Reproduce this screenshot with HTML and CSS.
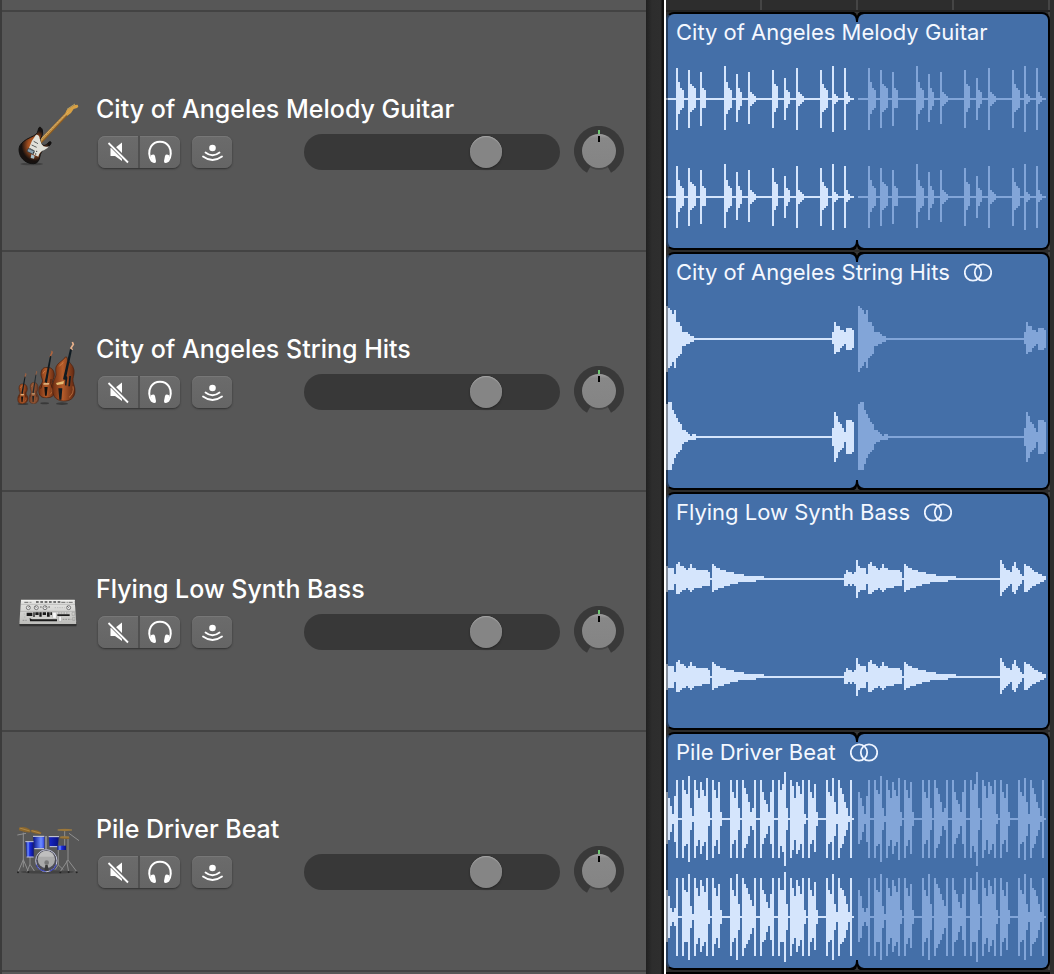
FILE: index.html
```html
<!DOCTYPE html>
<html lang="en">
<head>
<meta charset="utf-8">
<title>Tracks</title>
<link rel="stylesheet" href="styles.css">
</head>
<body>
<svg class="defs" aria-hidden="true">
  <defs>
    <linearGradient id="body-wood" x1="0" x2="1"><stop offset="0" stop-color="#6e2f14"/><stop offset=".45" stop-color="#b55c2a"/><stop offset="1" stop-color="#5c2510"/></linearGradient>
    <radialGradient id="sunburst"><stop offset="0" stop-color="#d07a34"/><stop offset=".45" stop-color="#a04c1e"/><stop offset=".85" stop-color="#17110f"/></radialGradient>
    <linearGradient id="shell" x1="0" x2="1"><stop offset="0" stop-color="#0a1590"/><stop offset=".3" stop-color="#6d8dff"/><stop offset=".5" stop-color="#1a2be0"/><stop offset="1" stop-color="#0a1280"/></linearGradient>
    <linearGradient id="silver" x1="0" y1="0" x2="0" y2="1"><stop offset="0" stop-color="#e9e9e7"/><stop offset="1" stop-color="#bdbdba"/></linearGradient>
    <linearGradient id="cap" x1="0" y1="0" x2="0" y2="1"><stop offset="0" stop-color="#a2a2a2"/><stop offset=".12" stop-color="#888"/><stop offset="1" stop-color="#848484"/></linearGradient>
  </defs>
  <symbol id="i-mute" viewBox="0 0 40 32">
    <path fill="#fff" d="M12.500 12h4.500L24 6.500v18.500l-7-5h-4.500z"/>
    <path stroke="#686868" stroke-width="4" d="M11 7l19 19"/>
    <path stroke="#fff" stroke-width="1.800" d="M10.500 7l19.500 19.500"/>
  </symbol>
  <symbol id="i-solo" viewBox="0 0 40 32">
    <path fill="none" stroke="#fff" stroke-width="2" d="M12 25.500C8.500 21 8.500 14.500 11 10.500 15 4 25 4 29 10.500 31.500 14.500 31.500 21 28 25.500"/>
    <path fill="#fff" d="M10.700 19.500q3.300-2 4.300.5l1 5q.3 1.800-1.500 2-2.300.2-3-1.800zM29.300 19.500q-3.300-2-4.300.5l-1 5q-.3 1.800 1.500 2 2.300.2 3-1.800z"/>
  </symbol>
  <symbol id="i-monitor" viewBox="0 0 40 32">
    <circle cx="20.500" cy="12" r="3.300" fill="#fff"/>
    <path fill="none" stroke="#fff" stroke-width="1.800" stroke-linecap="round" d="M13.500 16.500q7 5.500 14 0M11 20.500q9.500 7 19 0"/>
  </symbol>
  <symbol id="i-knob" viewBox="0 0 50 50">
    <path fill="#393939" d="M13 46.800A25 25 0 1 1 37 46.800L29 32H21z"/>
    <circle cx="25" cy="26.500" r="17.300" fill="#3b3b3b" opacity=".6"/>
    <circle cx="25" cy="25" r="17" fill="url(#cap)"/>
    <path fill="#6fc974" d="M24 4h2v4h-2z"/><path d="M24 10h2v6h-2z"/>
  </symbol>
  <symbol id="i-stereo" viewBox="0 0 28 20">
    <g fill="none" stroke="#eef4ff" stroke-width="1.800"><circle cx="9" cy="10.500" r="8.200"/><circle cx="19" cy="10.500" r="8.200"/></g>
  </symbol>
  <symbol id="i-notch" viewBox="0 0 16 10">
    <path d="M1 0H15V2Q9 3 9 9V10H7V9Q7 3 1 2z"/><path fill="#383838" d="M5 0Q7.500 1 8 4 8.500 1 11 0z"/>
  </symbol>
  <symbol id="violin" viewBox="0 0 56 110" preserveAspectRatio="none">
    <path fill="none" stroke="#b5653b" stroke-width="4" d="M39 3q5 2 0 6l-4 8"/>
    <path fill="url(#body-wood)" stroke="#48200f" stroke-width="2" d="M22 40C13 40 7 47 8 57c1 7 6 10 4 16-2 5-11 9-11 20 0 11 9 16 23 16s26-5 27-18c0-9-8-12-9-17s6-9 6-17c0-11-9-17-17-17z"/>
    <path fill="#111b20" d="M35 13l4 2-13 60-7-2z"/>
    <path fill="#ddb07b" d="M16 75h17l-2 4H15z"/>
    <path fill="#111" d="M18 84h10l-3 20h-5z"/>
    <path fill="none" stroke="#35150a" stroke-width="2" d="M11 78q-2 7-4 10M38 66q-3 10 3 20"/>
    <path fill="none" stroke="#e79152" stroke-width="2" opacity=".7" d="M14 54q1-5 7-6M42 88q2 8-6 13"/>
  </symbol>
</svg>

<main class="arrange">
  <section class="headers" aria-label="Track headers">
    <div class="lead"></div>

    <article class="track">
      <svg class="instrument" viewBox="0 -3 240 240" aria-hidden="true">
        <ellipse cx="65" cy="207" rx="34" ry="4" fill="#2d2d2d" opacity=".55"/>
        <path fill="none" stroke="#8b5b22" stroke-width="11" d="M90 142L174 53"/>
        <path fill="none" stroke="#c9984a" stroke-width="7" d="M89 140L174 51"/>
        <path fill="#d7a044" d="M165 58l5-13 14-9 10-6 9-1 2 6-4 4-10 3-8 12-11 8z"/>
        <path fill="none" stroke="#efc968" stroke-width="2" d="M171 43l24-16"/>
        <path fill="none" stroke="#5f3e18" stroke-width="3" stroke-dasharray="1 6" d="M88 142L171 52"/>
        <path fill="url(#sunburst)" stroke="#111" stroke-width="3" d="M88 97c-5 6-3 15-9 20-8 8-27 12-39 23-13 10-15 22-11 36 4 16 22 31 42 30 16-1 17-16 20-27 3-12 11-19 23-24 10-5 11-15 7-15-7 0-8 8-16 11-8 2-16-8-14-17 2-10 10-14 6-29-2-7-7-10-9-8z"/>
        <path fill="#e0e0d8" d="M78 119q10-1 11 12l6 17q8 12 22 5-2 6-14 12-15 5-18 20l-13-6-15-20 9-22z"/>
        <path stroke="#5a5d5c" stroke-width="3" d="M71 139l13 7M65 150l15 7M59 160l15 8"/>
        <path fill="#8aa0ad" stroke="#26343d" stroke-width="2" d="M55 160l18 9-4 9-18-9z"/>
        <path fill="#a8c1cc" d="M64 178l10 4-2 9-10-2z"/>
        <g fill="#333"><circle cx="80" cy="169" r="2"/><circle cx="77" cy="177" r="2"/><circle cx="71" cy="173" r="2"/></g>
        <path stroke="#fff" opacity=".5" d="M62 163L175 50"/>
      </svg>
      <div class="body">
        <h2>City of Angeles Melody Guitar</h2>
        <div class="controls">
          <div class="pair"><button aria-label="Mute"><svg><use href="#i-mute"/></svg></button><button aria-label="Solo"><svg><use href="#i-solo"/></svg></button></div>
          <button class="single" aria-label="Input monitoring"><svg><use href="#i-monitor"/></svg></button>
          <input class="volume" type="range" max="1000" value="745" aria-label="Volume">
          <label class="knob"><svg><use href="#i-knob"/></svg><input type="range" min="-64" max="63" value="0" aria-label="Pan"></label>
        </div>
      </div>
    </article>

    <article class="track">
      <svg class="instrument" viewBox="0 -3 240 240" aria-hidden="true">
        <g fill="#222" opacity=".55"><ellipse cx="39" cy="207" rx="16" ry="3"/><ellipse cx="104" cy="205" rx="13" ry="3"/><ellipse cx="156" cy="206" rx="18" ry="4"/></g>
        <use href="#violin" x="22" y="113" width="35" height="94"/>
        <use href="#violin" x="56" y="106" width="33" height="101" opacity=".75"/>
        <use href="#violin" x="85" y="45" width="56" height="145"/>
        <path fill="none" stroke="#e8b18b" stroke-width="5" d="M187 21l3 7-7 11 4 6"/>
        <path fill="url(#body-wood)" stroke="#48200f" stroke-width="2" d="M166 66c-6 12-23 16-28 30-3 12 3 21-2 31-7 11-9 22-8 40 1 19 12 30 32 31 21 1 33-9 35-27 1-14-4-21-6-32-2-10 5-19 3-34-2-17-20-24-22-39z"/>
        <path fill="#101b22" d="M180 42l6 2-19 91-8-2z"/>
        <path fill="#101b22" d="M145 160h12l-3 34h-6zM167 123q7 0 4 13l-2 16-4-1zM178 123h5l-3 31h-5z"/>
        <path fill="#e5bd72" d="M138 144l24-6-2 9-19 3z"/>
        <path fill="none" stroke="#e39155" stroke-width="3" opacity=".6" d="M148 94q7-9 12-11M189 154q4 22-12 33"/>
      </svg>
      <div class="body">
        <h2>City of Angeles String Hits</h2>
        <div class="controls">
          <div class="pair"><button aria-label="Mute"><svg><use href="#i-mute"/></svg></button><button aria-label="Solo"><svg><use href="#i-solo"/></svg></button></div>
          <button class="single" aria-label="Input monitoring"><svg><use href="#i-monitor"/></svg></button>
          <input class="volume" type="range" max="1000" value="745" aria-label="Volume">
          <label class="knob"><svg><use href="#i-knob"/></svg><input type="range" min="-64" max="63" value="0" aria-label="Pan"></label>
        </div>
      </div>
    </article>

    <article class="track">
      <svg class="instrument" viewBox="0 -33 240 240" aria-hidden="true">
        <path fill="#333" d="M27 112h174l-2 12H29z"/>
        <path fill="url(#silver)" d="M33 44h161l5 73H28z"/>
        <path fill="#f1f1ef" d="M34 45h160v3H34z"/>
        <path stroke="#6b6b6b" stroke-width="3" stroke-dasharray="12 4 3 3" d="M43 52h23M154 52h36"/>
        <path stroke="#4e4e4e" stroke-width="4" stroke-dasharray="8 5" d="M78 51h74"/>
        <path stroke="#777" d="M32 58h163M30 79h167"/>
        <g fill="#e9e9e9" stroke="#4b4b4b" stroke-width="2"><circle cx="55" cy="68" r="6"/><circle cx="79" cy="68" r="6"/><circle cx="105" cy="68" r="6"/><circle cx="176" cy="68" r="6"/></g>
        <path stroke="#222" stroke-width="2" d="M55 67l4-3M79 68l-4-4M105 68l3-4M176 68l-4-4M90 66h5M115 66h5"/>
        <path stroke="#aaa" stroke-width="2" stroke-dasharray="4 3" d="M134 68h30M41 87h7M42 96h7"/>
        <path fill="#1a1a1a" d="M50 83h17v10H50zM70 82h4v14h-4zM76 82h10v8H76zM88 82h7v13h-7zM98 82h10v8H98zM111 82h8v13h-8zM121 82h5v8h-5zM142 88h37v5h-37zM59 99l6 4h76v6H60z"/>
        <path fill="#fafafa" stroke="#888" d="M128 82h11v18h-11zM147 94h7v15h-7z"/>
        <path stroke="#777" stroke-width="2" stroke-dasharray="5 3" d="M144 84h34M158 103h26M38 106h12"/>
        <path fill="none" stroke="#777" d="M186 82h8v9h-8zM188 97h7v9h-7z"/>
        <path stroke="#e8e8e6" stroke-width="2" d="M68 99h70"/>
      </svg>
      <div class="body">
        <h2>Flying Low Synth Bass</h2>
        <div class="controls">
          <div class="pair"><button aria-label="Mute"><svg><use href="#i-mute"/></svg></button><button aria-label="Solo"><svg><use href="#i-solo"/></svg></button></div>
          <button class="single" aria-label="Input monitoring"><svg><use href="#i-monitor"/></svg></button>
          <input class="volume" type="range" max="1000" value="745" aria-label="Volume">
          <label class="knob"><svg><use href="#i-knob"/></svg><input type="range" min="-64" max="63" value="0" aria-label="Pan"></label>
        </div>
      </div>
    </article>

    <article class="track">
      <svg class="instrument" viewBox="0 -3 240 240" aria-hidden="true">
        <ellipse cx="112" cy="171" rx="80" ry="5" fill="#363636" opacity=".6"/>
        <g fill="none" stroke="#8f8f8f" stroke-width="3"><path d="M40 53v104M40 134l-16 38M40 134l15 36M60 126v22l-9 22M60 148l13 20M164 45v52M174 70v65l-24 36M174 135l27 36M170 137l6 34M145 102v48l-10 14M145 150l15 14M177 55l30 22M22 60l26-5"/></g>
        <path fill="url(#shell)" stroke="#111b70" d="M47 80h24v46H50z"/>
        <path stroke="#ccd" stroke-width="3" d="M46 80h26M50 126h21"/>
        <path fill="url(#shell)" stroke="#111b70" d="M70 65h33v35H73zM117 66h29l-3 29h-24z"/>
        <path stroke="#d5d6e5" stroke-width="3" d="M69 64h34M116 65h31M73 101h29M119 95h24"/>
        <path fill="url(#shell)" d="M142 92h26v13h-26z"/>
        <path stroke="#bbb" stroke-width="3" d="M108 63v40"/>
        <ellipse cx="109" cy="137" rx="33" ry="34" fill="#4c4c58"/>
        <ellipse cx="109" cy="137" rx="32" ry="33" fill="none" stroke="#c4c7dc" stroke-width="3"/>
        <circle cx="109" cy="133" r="26" fill="#aaa"/>
        <path fill="#c4c4c4" d="M86 125q5-17 23-17t23 17z" opacity=".8"/>
        <path fill="none" stroke="#2831bb" stroke-width="3" d="M79 149q5 17 28 20M139 149q-4 15-20 20"/>
        <circle cx="110" cy="143" r="7" fill="#777"/><path fill="#3a3a3a" d="M106 150h7l3 17h-13z"/>
        <path fill="#8a662d" d="M27 39q14-7 32 4l2 9q-17 1-34-6zM62 45q19-3 33 8l-4 5q-17-1-29-7zM141 45q23-8 47 0-23 7-47 0zM150 66q12-4 28 0v5q-15 2-28-1z"/>
        <path fill="none" stroke="#c09a55" stroke-width="2" d="M29 39l30 9M65 47l27 8M143 45h43M151 66h26"/>
        <g fill="#222"><circle cx="24" cy="172" r="3"/><circle cx="55" cy="171" r="3"/><circle cx="151" cy="172" r="3"/><circle cx="200" cy="172" r="3"/><circle cx="176" cy="171" r="3"/></g>
      </svg>
      <div class="body">
        <h2>Pile Driver Beat</h2>
        <div class="controls">
          <div class="pair"><button aria-label="Mute"><svg><use href="#i-mute"/></svg></button><button aria-label="Solo"><svg><use href="#i-solo"/></svg></button></div>
          <button class="single" aria-label="Input monitoring"><svg><use href="#i-monitor"/></svg></button>
          <input class="volume" type="range" max="1000" value="745" aria-label="Volume">
          <label class="knob"><svg><use href="#i-knob"/></svg><input type="range" min="-64" max="63" value="0" aria-label="Pan"></label>
        </div>
      </div>
    </article>
  </section>

  <div class="divider"></div>

  <section class="timeline" aria-label="Timeline">
    <div class="lead"></div>
    <div class="lane"><div class="region">
      <h3>City of Angeles Melody Guitar</h3>
      <svg class="wave" data-wave="guitar" viewBox="0 0 384 198" preserveAspectRatio="none"></svg>
      <svg class="notch"><use href="#i-notch"/></svg><svg class="notch bottom"><use href="#i-notch"/></svg>
    </div></div>
    <div class="lane"><div class="region">
      <h3>City of Angeles String Hits <svg class="stereo"><use href="#i-stereo"/></svg></h3>
      <svg class="wave" data-wave="strings" viewBox="0 0 384 198" preserveAspectRatio="none"></svg>
      <svg class="notch"><use href="#i-notch"/></svg><svg class="notch bottom"><use href="#i-notch"/></svg>
    </div></div>
    <div class="lane"><div class="region">
      <h3>Flying Low Synth Bass <svg class="stereo"><use href="#i-stereo"/></svg></h3>
      <svg class="wave" data-wave="bass" viewBox="0 0 384 198" preserveAspectRatio="none"></svg>
    </div></div>
    <div class="lane"><div class="region">
      <h3>Pile Driver Beat <svg class="stereo"><use href="#i-stereo"/></svg></h3>
      <svg class="wave" data-wave="beat" viewBox="0 0 384 198" preserveAspectRatio="none"></svg>
      <svg class="notch"><use href="#i-notch"/></svg><svg class="notch bottom"><use href="#i-notch"/></svg>
    </div></div>
    <div class="next-region"></div>
  </section>
</main>
<script src="waves.js"></script>
</body>
</html>
```

FILE: styles.css
```css
* { box-sizing: border-box; }
body {
  margin: 0;
  background: #575757;
  font-family: Inter, "Liberation Sans", sans-serif;
  color: #fff;
}
.defs { position: absolute; width: 0; height: 0; }
h2, h3 { margin: 0; white-space: nowrap; }
.arrange {
  display: grid;
  grid-template-columns: 646fr 20px 388fr;
  min-height: 100vh;
}
.lead { height: 12px; border-bottom: 2px solid #434343; }
.headers { background: #575757; border-left: 2px solid #3c3c3c; }
.track {
  display: flex;
  gap: 6px;
  height: 240px;
  padding: 82px 22px 0 8px;
  border-bottom: 2px solid #434343;
}
.instrument { flex: none; width: 80px; height: 80px; }
.body { flex: 1; min-width: 0; }
.body h2 { font-size: 25px; font-weight: 500; line-height: 30px; }
.controls {
  display: flex;
  align-items: center;
  height: 52px;
  margin-top: 2px;
  padding-left: 2px;
}
.pair, .single {
  display: flex;
  flex: none;
  height: 32px;
  border: 0;
  border-radius: 7px;
  background: linear-gradient(#6b6b6b, #656565);
  box-shadow: 0 1px 2px #303030, inset 0 1px 0 #777;
}
.pair { width: 82px; }
.single { width: 40px; margin-left: 12px; padding: 0; }
.pair button { flex: 1; padding: 0; border: 0; background: none; }
.pair button + button { border-left: 2px solid #505050; }
.pair svg, .single svg { display: block; width: 40px; height: 32px; }
.volume {
  appearance: none;
  width: 256px;
  height: 36px;
  margin: 0 14px 0 auto;
  padding: 0 2px;
  border-radius: 18px;
  background: #383838;
}
.volume::-webkit-slider-thumb {
  appearance: none;
  width: 32px;
  height: 32px;
  border-radius: 50%;
  background: #858585;
  box-shadow: 0 1px 2px #222, inset 0 1px 1px #a5a5a5;
}
.knob { position: relative; flex: none; align-self: flex-start; width: 50px; height: 50px; }
.knob svg { display: block; width: 50px; height: 50px; }
.knob input { position: absolute; inset: 0; width: 100%; height: 100%; margin: 0; opacity: 0; }

.divider {
  border-right: 2px solid #fff;
  background: linear-gradient(90deg, #202020, #2d2d2d 6px, #2e2e2e 15px, #111 16px);
}
.timeline {
  padding-right: 4px;
  background: repeating-linear-gradient(90deg, #2d2d2d 0 94px, #454545 94px 96px);
}
.timeline .lead { border-color: #222; }
.lane { height: 240px; border-bottom: 2px solid #2b2b2b; }
.next-region { height: 2px; background: #000; }
.region {
  position: relative;
  height: 238px;
  border: 2px solid #000;
  border-left-color: #243c5c;
  border-radius: 8px;
  background: #446fa8;
}
.region h3 {
  display: flex;
  align-items: center;
  gap: 14px;
  padding-left: 8px;
  font-size: 22px;
  font-weight: 400;
  line-height: 36px;
  color: #f4f8ff;
}
.stereo { flex: none; width: 28px; height: 20px; }
.wave { display: block; width: calc(100% + 4px); height: 198px; margin-left: -2px; shape-rendering: crispEdges; }
.played { fill: #d5e5fc; }
.looped { fill: #82a5d8; }
.edge { fill: #838d9b; }
.notch { position: absolute; top: -2px; left: calc(50% - 9px); width: 16px; height: 10px; }
.notch.bottom { top: auto; bottom: -2px; transform: scaleY(-1); }
```

FILE: waves.js
```js
// Peaks above and below the centre line of each channel, one pair per column.
// Each entry is [first column, peaks above, peaks below].
const guitar = [
  [5, [15, 8, 5, 4], [15, 7, 5, 4]], [11, [14, 7, 6, 5], [14, 6, 5, 4]], [17, [13, 5, 4], [13, 4, 4]],
  [29, [16, 8, 5, 4], [15, 7, 5, 4]], [35, [12, 5, 3], [11, 5, 3]], [41, [13, 3, 2, 1], [12, 3, 2, 1]],
  [53, [14, 7, 6], [14, 6, 4]], [59, [10, 4, 3], [10, 4, 2]], [65, [15, 3, 2, 1], [15, 3, 2, 1]],
  [77, [14, 7, 5, 4], [14, 6, 5, 4]], [83, [16, 2, 1], [16, 2, 1]], [89, [15, 3, 1], [15, 2, 1]]
];
const strings1 = [
  [0, [16, 15, 14, 12, 14, 8, 8, 6, 3, 3, 3, 2, 1, 1, 0], [16, 14, 13, 11, 14, 9, 8, 7, 3, 3, 2, 2, 1, 1, 0]],
  [83, [3, 8, 6, 6, 4, 4, 3, 5, 5, 5, 4], [2, 7, 6, 6, 4, 3, 2, 5, 5, 5, 4]]
];
const strings2 = [
  [0, [16, 17, 17, 13, 11, 9, 7, 6, 3, 3, 2, 1, 0, 1, 1], [16, 16, 16, 13, 10, 8, 7, 6, 3, 2, 2, 1, 1, 1, 1]],
  [83, [4, 12, 10, 7, 6, 4, 2, 8, 8, 8, 7], [4, 12, 10, 7, 6, 5, 2, 8, 8, 8, 7]]
];
const bassUp = [6, 5, 5, 5, 2, 7, 8, 6, 6, 5, 4, 5, 7, 5, 5, 4, 4, 4, 4, 4, 4, 3, 0, 7, 6, 5, 5, 4, 4, 4, 3, 3, 3, 3, 2, 2, 2, 2, 2, 1, 1, 1, 1, 1, 1, 1, 1, 1, 1];
const bassDown = [6, 5, 5, 5, 2, 7, 7, 6, 5, 5, 4, 5, 6, 5, 4, 4, 4, 4, 3, 3, 3, 3, 0, 6, 5, 5, 4, 4, 4, 3, 3, 3, 2, 2, 2, 2, 1, 1, 1, 1, 1, 1, 1, 1, 1, 0, 0, 0, 0];
const bass = [
  [0, bassUp, bassDown], [89, [2, 4, 3, 3, 2, 3, 9], [3, 3, 2, 3, 2, 3, 9]], [96, bassUp, bassDown],
  [167, [9, 7, 5, 4, 4, 3, 6, 8, 5, 4, 2, 1, 7, 6, 6, 5, 4, 3, 3, 2, 2, 1, 1], [8, 6, 5, 4, 3, 2, 6, 7, 5, 3, 2, 0, 6, 6, 5, 4, 3, 3, 2, 2, 1, 1, 0]]
];
const beatUp = [
  [0, [13, 10, 6, 2, 11, 19]], [8, [19, 14, 12, 21, 5, 1]], [14, [19, 14, 10, 18, 14, 11, 20, 3]],
  [23, [19, 14, 10, 18, 3]], [32, [19, 13, 10, 19, 5]], [38, [19, 15, 12, 8, 3, 5, 19]],
  [47, [19, 13, 9, 7, 3, 13, 19]], [56, [19, 14, 17, 23, 5]], [62, [19, 16, 10, 18, 16, 12, 19, 2]],
  [71, [19, 13, 10, 17, 3]], [80, [19, 13, 11, 20, 8, 2]], [86, [19, 15, 12, 8, 5, 1, 19]]
];
const beatUp2 = [
  [0, [13, 10, 4, 2, 4, 19]], [8, [19, 13, 12, 21, 5, 1]], [14, [19, 14, 10, 18, 15, 12, 19, 3]],
  [23, [19, 14, 10, 16, 3]], [32, [19, 13, 10, 21, 6]], [38, [19, 16, 14, 11, 8, 5, 19]],
  [47, [19, 13, 11, 7, 4, 11, 19]], [56, [19, 13, 13, 22, 6]], [62, [19, 14, 10, 18, 15, 11, 19, 3]],
  [71, [19, 13, 10, 17, 3]], [80, [19, 13, 11, 21, 6, 2]], [86, [19, 14, 13, 10, 6, 2, 19]]
];
const mirror = list => list.map(([start, up]) => [start, up, up.map(v => (v > 12 && v < 19 ? v - 1 : v))]);

const waves = {
  guitar: { channels: [guitar, guitar], loops: true },
  strings: { channels: [strings1, strings2], loops: true },
  bass: { channels: [bass, bass], loops: false },
  beat: { channels: [mirror(beatUp), mirror(beatUp2)], loops: true }
};

function columns(segments, count) {
  const out = Array.from({ length: count }, () => [0, 0]);
  for (const [start, up, down] of segments) {
    up.forEach((v, i) => { if (start + i < count) out[start + i] = [v, down[i]]; });
  }
  return out;
}

function addPath(svg, name, d) {
  const path = document.createElementNS("http://www.w3.org/2000/svg", "path");
  path.setAttribute("class", name);
  path.setAttribute("d", d);
  svg.append(path);
}

for (const svg of document.querySelectorAll(".wave")) {
  const { channels, loops } = waves[svg.dataset.wave];
  const paths = { edge: "", played: "", looped: "" };
  channels.forEach((segments, channel) => {
    const centre = 48 + channel * 98;
    const data = columns(segments, loops ? 94 : 190);
    const draw = (name, [up, down], col) => {
      paths[name] += `M${col * 2} ${centre - up * 2}h2v${(up + down + 1) * 2}h-2z`;
    };
    data.forEach((peak, col) => draw(col ? "played" : "edge", peak, col));
    if (loops) data.forEach((peak, col) => draw("looped", peak, col + 96));
  });
  for (const name in paths) addPath(svg, name, paths[name]);
}
```
